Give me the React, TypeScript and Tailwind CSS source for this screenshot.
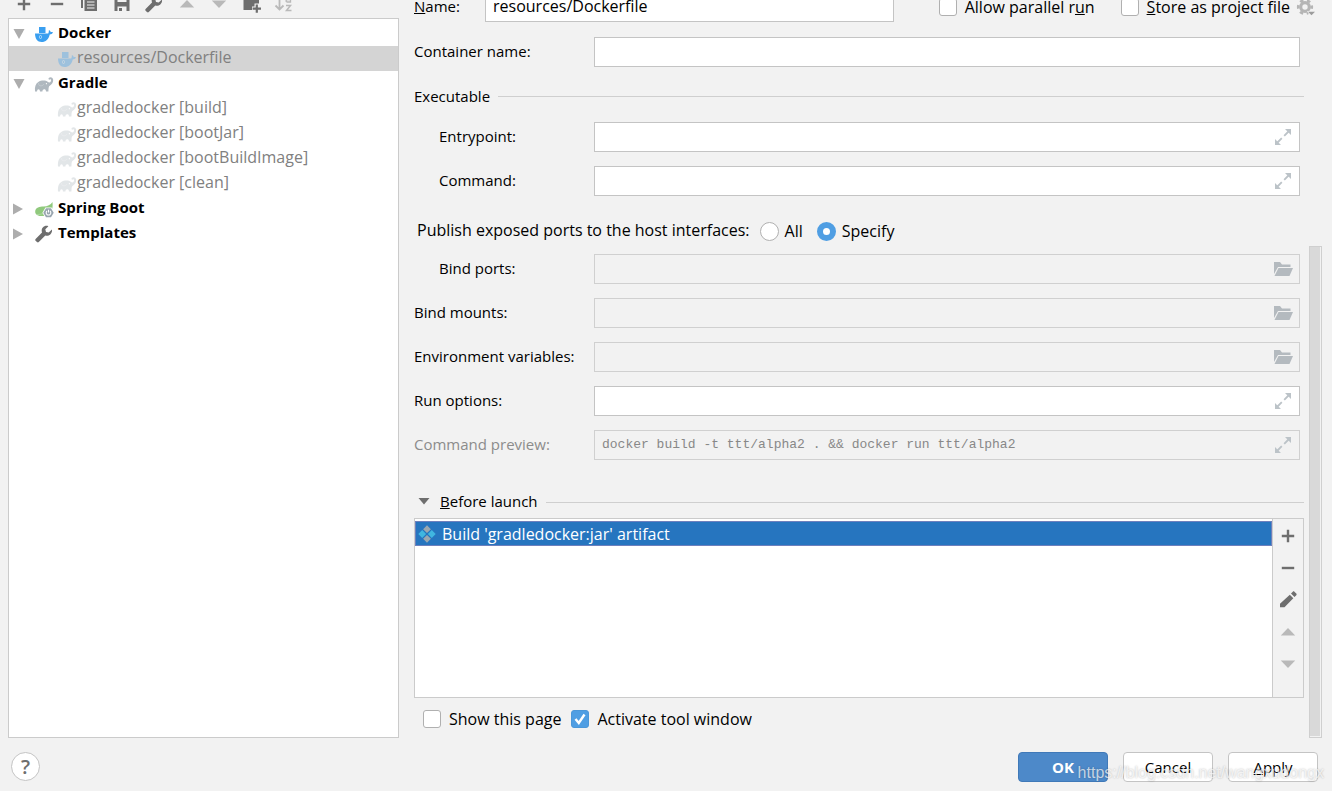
import { useState } from 'react';
import type { ReactNode } from 'react';

const DockerIcon = ({ faded = false }: { faded?: boolean }) => (
    <svg viewBox="0 0 20 20" className={`size-5 shrink-0 ${faded ? 'opacity-35' : ''}`}>
        <path d="M5 3h6.500v6H5z" fill="#3a9ff0" />
        <path d="M1 9.5h13.200c.6-1 .7-2.500.7-3.500 1.200.6 1.700 1.400 1.800 2.200.8-.2 1.700-.1 2.300.3-.6 1.300-1.900 1.900-3.300 1.900C14.700 15 11.700 18 7.600 18 3.400 18 1 14.500 1 9.500z" fill="#3a9ff0" />
        <rect x="5.500" y="11.500" width="2" height="3" rx="1" fill="none" stroke="#c5e4fb" strokeWidth=".8" />
    </svg>
);

const GradleIcon = ({ faded = false }: { faded?: boolean }) => (
    <svg viewBox="0 0 20 20" className={`size-5 shrink-0 ${faded ? 'opacity-35' : ''}`}>
        <path d="M1 17.500C.6 13 1.500 9.700 4.300 8 7 6.300 11.500 6 14 8c1 .8 2.200.5 2.900-.8.4-.9.3-1.700-.3-1.900-.6-.2-.9.5-1.600.3-.7-.3-.6-1.300 0-1.800 1.700-1.300 4.200-.2 4.200 2.300 0 2.900-1.700 4.600-3.500 5.700-.9.600-1.100 2.200-1.200 3.700l-.1 2H12c0-1.600-.8-2.200-1.800-2.200s-1.700.7-1.800 2.200H6c-.1-1.500-.7-2.200-1.500-2.200S3.200 16 3 17.500z" fill="#afb8bf" />
        <path d="M4.500 9c-.1 2 .9 3 2.700 2.800 1.500-.1 2.300-.9 2.500-1.800" fill="none" stroke="#cdd3d7" strokeWidth=".6" />
        <circle cx="12.400" cy="9.700" r=".6" fill="#fff" />
    </svg>
);

const SpringIcon = () => (
    <svg viewBox="0 0 20 20" className="size-5 shrink-0">
        <path d="M18.500 3c.3 4 .3 7-1.500 9.500L10 17H5.500C2.500 16.500.8 14.500 1.200 12 1.800 8.500 5.500 7.700 9.500 7.500 13.500 7.400 16.500 6 18.500 3z" fill="#90c97d" />
        <path d="M3 15.500c4 0 8-1 11-4" fill="none" stroke="#b5dca8" strokeWidth=".8" />
        <path d="M11.400 8.500h6.200l3 5.200-3 5.200h-6.200l-3-5.200z" fill="#fff" />
        <path d="M12 9.200h5l2.700 4.500-2.700 4.600h-5l-2.700-4.600z" fill="#98a5af" />
        <path d="M13 12a2.300 2.300 0 1 0 3 0M14.500 10.800v2.600" fill="none" stroke="#fff" strokeWidth="1.100" />
    </svg>
);

const WrenchIcon = () => (
    <svg viewBox="0 0 20 20" className="size-5 shrink-0">
        <path d="M17.900 5.600l-3.200 3-2.700-.6-.7-2.700 3.100-3.100c-2-.8-4.300-.2-5.600 1.300-1.200 1.400-1.400 3.200-.8 4.900L1.600 14.900c-.5.5-.5 1.300 0 1.800l1.400 1.400c.5.500 1.300.5 1.800 0l6.500-6.600c1.700.6 3.700.2 5-1.100 1.400-1.300 2.100-3.100 1.600-4.800z" fill="#6e6e6e" />
    </svg>
);

const PlusIcon = () => (
    <svg viewBox="0 0 20 20" className="size-5 shrink-0">
        <path d="M8.800 3.800h2.400v5h5v2.400h-5v5H8.800v-5h-5V8.800h5z" fill="#6e6e6e" />
    </svg>
);

const MinusIcon = () => (
    <svg viewBox="0 0 20 20" className="size-5 shrink-0">
        <path d="M3.800 8.800h12.400v2.400H3.800z" fill="#6e6e6e" />
    </svg>
);

const UpIcon = () => (
    <svg viewBox="0 0 20 20" className="size-5 shrink-0">
        <path d="M10 6l7.200 7.500H2.800z" fill="#b9b9b9" />
    </svg>
);

const DownIcon = () => (
    <svg viewBox="0 0 20 20" className="size-5 shrink-0">
        <path d="M10 14L2.800 6.500h14.400z" fill="#b9b9b9" />
    </svg>
);

const PencilIcon = () => (
    <svg viewBox="0 0 20 20" className="size-5 shrink-0">
        <path d="M11.800 4.700l3.500 3.500-8.800 9H2v-3.500zM13 3.500l1.800-1.800c.5-.5 1.100-.5 1.600 0l1.900 1.900c.5.5.5 1.100 0 1.600L16.500 7z" fill="#6e6e6e" />
    </svg>
);

const CopyIcon = () => (
    <svg viewBox="0 0 20 20" className="size-5 shrink-0">
        <path d="M2 1h11v2H4v11H2z" fill="#6e6e6e" />
        <path d="M5.500 4.500h12.500V17H5.500z" fill="#6e6e6e" />
        <path d="M8 8h7.500M8 11h7.500M8 14h7.500" stroke="#f2f2f2" strokeWidth="1.200" />
    </svg>
);

const SaveIcon = () => (
    <svg viewBox="0 0 20 20" className="size-5 shrink-0">
        <path d="M2.500 2.500h13l2 2V17h-15z" fill="#6e6e6e" />
        <path d="M5.500 2.500h9V8h-9zM5.500 12.500h9V17h-9z" fill="#f2f2f2" />
        <path d="M7 14h3v3H7z" fill="#6e6e6e" />
    </svg>
);

const NewFolderIcon = () => (
    <svg viewBox="0 0 20 20" className="size-5 shrink-0">
        <path d="M1.500 3h6l2 2h7.500v4.500h-4.500v3H10V16H1.500z" fill="#6e6e6e" />
        <path d="M13.700 10.500h2.200v3H19v2.200h-3.100v3h-2.200v-3h-3.100v-2.200h3.100z" fill="#6e6e6e" />
    </svg>
);

const SortIcon = () => (
    <svg viewBox="0 0 20 20" className="size-5 shrink-0" fill="none" stroke="#b9b9b9">
        <path d="M5.500 2v13M1.500 11.500l4 4 4-4" strokeWidth="1.800" />
        <path d="M12.500 3.500h4v4.500h-3.500c-1.500-.5-1-2.300.5-2.300h3" strokeWidth="1.300" />
        <path d="M12 11.500h4.500l-4 5h5" strokeWidth="1.500" />
    </svg>
);

const ExpandIcon = () => (
    <svg viewBox="0 0 20 20" className="size-5">
        <path d="M12 2h6v6zM2 18v-6l6 6z" fill="#bcc3c8" />
        <path d="M15.500 4.500L11.200 8.800M4.500 15.500l4.300-4.300" stroke="#bcc3c8" strokeWidth="1.800" />
    </svg>
);

const FolderIcon = () => (
    <svg viewBox="0 0 20 20" className="size-5">
        <path d="M1 3h6l2 2.500h8.500V8H5L1 15z" fill="#b4babf" />
        <path d="M5.500 9H20l-3.500 8H1.500z" fill="#b4babf" />
    </svg>
);

const GearIcon = () => (
    <svg viewBox="0 0 20 20" className="size-5">
        <circle cx="9" cy="10" r="4.300" fill="none" stroke="#b5b5b5" strokeWidth="3.200" />
        <circle cx="9" cy="10" r="6.800" fill="none" stroke="#b5b5b5" strokeWidth="2.600" strokeDasharray="3.560" strokeDashoffset="1.780" />
        <path d="M11 14h9v5h-6z" fill="#f2f2f2" />
        <path d="M12 14.800h7L15.500 18.300z" fill="#9c9c9c" />
    </svg>
);

const ArtifactIcon = () => (
    <svg viewBox="0 0 20 20" className="size-5">
        <path d="M10 1.300l3.900 3.900L10 9.100 6.100 5.200zM10 10.900l3.900 3.900-3.900 3.900-3.900-3.900z" fill="#9aa7b0" />
        <path d="M5.200 6.100L9.100 10l-3.900 3.900L1.300 10zM14.800 6.100l3.900 3.900-3.900 3.900-3.900-3.900z" fill="#40b6e0" />
    </svg>
);

const CHILDREN = [
    'gradledocker [build]',
    'gradledocker [bootJar]',
    'gradledocker [bootBuildImage]',
    'gradledocker [clean]',
];

const GroupRow = ({ label, icon, open }: { label: string; icon: ReactNode; open: boolean }) => (
    <li className="flex h-[25px] items-center pl-1">
        <button type="button" aria-label={`Toggle ${label}`} className="mr-[9px] size-3">
            <svg viewBox="0 0 12 12" className="size-3">
                <path d={open ? 'M.5 1h11L6 11z' : 'M0 .5l10 5.500-10 5.500z'} fill="#adadad" />
            </svg>
        </button>
        {icon}
        <span className="ml-1 pb-1 text-[15px] font-bold">{label}</span>
    </li>
);

const LeafRow = ({ label, icon, selected = false }: { label: string; icon: ReactNode; selected?: boolean }) => (
    <li className={`flex h-[25px] items-center pl-12 text-[#808080] ${selected ? 'bg-[#d4d4d4]' : ''}`}>
        {icon}
        <span className="pb-1">{label}</span>
    </li>
);

const Check = ({ label, defaultChecked = false }: { label: ReactNode; defaultChecked?: boolean }) => (
    <label className="flex items-center gap-2">
        <span className="relative size-[18px]">
            <input
                type="checkbox"
                defaultChecked={defaultChecked}
                className="peer block size-[18px] appearance-none rounded-[3px] border border-[#b0b0b0] bg-white checked:border-[#4b97d9] checked:bg-[#4f9ee3]"
            />
            <svg viewBox="0 0 18 18" className="pointer-events-none absolute inset-0 hidden peer-checked:block">
                <path d="M4.500 9l3.300 4L13.500 4.500" fill="none" stroke="#fff" strokeWidth="2.400" />
            </svg>
        </span>
        <span>{label}</span>
    </label>
);

interface FieldProps {
    id: string;
    label: string;
    indent?: boolean;
    disabled?: boolean;
    value?: string;
    action?: 'expand' | 'browse';
}

const Field = ({ id, label, indent, disabled, value, action }: FieldProps) => (
    <div className="flex h-[30px] items-center pr-1">
        <label htmlFor={id} className={`w-[180px] shrink-0 pb-0.5 text-[15px] ${indent ? 'pl-[25px]' : ''} ${value ? 'text-[#8c8c8c]' : ''}`}>
            {label}
        </label>
        <div className={`flex h-full flex-1 items-center border pr-[6px] ${disabled ? 'border-[#d0d0d0]' : 'border-[#c4c4c4] bg-white'}`}>
            <input
                id={id}
                type="text"
                defaultValue={value}
                disabled={disabled}
                className="h-full min-w-0 flex-1 px-[7px] pb-0.5 font-['Liberation_Mono',monospace] text-[13px] text-[#888888] outline-none"
            />
            {action && (
                <button type="button" aria-label={action === 'expand' ? `Expand ${label}` : `Browse ${label}`}>
                    {action === 'expand' ? <ExpandIcon /> : <FolderIcon />}
                </button>
            )}
        </div>
    </div>
);

const TOOLS = [
    { name: 'Add', icon: <PlusIcon /> },
    { name: 'Remove', icon: <MinusIcon /> },
    { name: 'Copy', icon: <CopyIcon /> },
    { name: 'Save', icon: <SaveIcon /> },
    { name: 'Edit templates', icon: <WrenchIcon /> },
    { name: 'Move up', icon: <UpIcon /> },
    { name: 'Move down', icon: <DownIcon /> },
    { name: 'New folder', icon: <NewFolderIcon /> },
    { name: 'Sort', icon: <SortIcon /> },
];

const TASK_TOOLS = [
    { name: 'Add task', icon: <PlusIcon /> },
    { name: 'Remove task', icon: <MinusIcon /> },
    { name: 'Edit task', icon: <PencilIcon /> },
    { name: 'Move task up', icon: <UpIcon /> },
    { name: 'Move task down', icon: <DownIcon /> },
];

const RADIO = 'size-[19px] appearance-none rounded-full border border-[#b0b0b0] bg-white checked:border-[6px] checked:border-[#4f9ee3]';

const BUTTON = 'h-[30px] w-[90px] rounded-[4px] border text-[15px]';

const App = () => {
    const [ports, setPorts] = useState('specify');

    return (
        <div className="relative flex h-screen flex-col overflow-hidden bg-[#f2f2f2] font-['Open_Sans',sans-serif] text-base leading-5 text-black">
            <main className="flex min-h-0 flex-1">
                <aside className="flex w-[399px] shrink-0 flex-col pl-2">
                    <div className="flex h-[18px] w-[286px] items-end justify-between overflow-hidden pb-1 pl-[6px]">
                        {TOOLS.map((t) => (
                            <button key={t.name} type="button" aria-label={t.name}>{t.icon}</button>
                        ))}
                    </div>
                    <ul className="flex-1 border border-[#cbcbcb] bg-white pt-0.5">
                        <GroupRow label="Docker" icon={<DockerIcon />} open />
                        <LeafRow label="resources/Dockerfile" icon={<DockerIcon faded />} selected />
                        <GroupRow label="Gradle" icon={<GradleIcon />} open />
                        {CHILDREN.map((c) => (
                            <LeafRow key={c} label={c} icon={<GradleIcon faded />} />
                        ))}
                        <GroupRow label="Spring Boot" icon={<SpringIcon />} open={false} />
                        <GroupRow label="Templates" icon={<WrenchIcon />} open={false} />
                    </ul>
                </aside>

                <section className="flex min-w-0 flex-1 flex-col pl-[15px] pr-[5px]">
                    {/* first row is scrolled partly out of view */}
                    <div className="-mr-3 flex h-[22px] shrink-0 items-end">
                        <div className="flex h-[30px] flex-1 items-center">
                            <label htmlFor="name" className="w-[71px] pb-0.5 text-[15px]"><u>N</u>ame:</label>
                            <input
                                id="name"
                                type="text"
                                defaultValue="resources/Dockerfile"
                                className="h-full min-w-0 flex-1 border border-[#c4c4c4] bg-white px-[7px] pb-0.5 outline-none"
                            />
                            <div className="ml-[45px] flex items-center">
                                <Check label={<>Allow parallel r<u>u</u>n</>} />
                                <div className="ml-[26px]">
                                    <Check label={<><u>S</u>tore as project file</>} />
                                </div>
                                <button type="button" aria-label="Storage settings" className="ml-[6px]"><GearIcon /></button>
                            </div>
                        </div>
                    </div>

                    <div className="mt-[15px]">
                        <Field id="container" label="Container name:" />
                    </div>

                    <h2 className="mt-[15px] mb-3 flex h-7 items-center gap-2 text-[15px]">
                        Executable
                        <span className="h-px flex-1 bg-[#cfcfcf]" />
                    </h2>
                    <div className="flex flex-col gap-[14px]">
                        <Field id="entrypoint" label="Entrypoint:" indent action="expand" />
                        <Field id="command" label="Command:" indent action="expand" />
                    </div>

                    <fieldset className="mt-6 mb-[10px] flex h-6 items-center pl-[3px]">
                        <span className="mr-[10px] pb-0.5">Publish exposed ports to the host interfaces:</span>
                        <label className="mr-[14px] flex items-center gap-[6px]">
                            <input type="radio" name="ports" className={RADIO} checked={ports === 'all'} onChange={() => setPorts('all')} />
                            All
                        </label>
                        <label className="flex items-center gap-[6px]">
                            <input type="radio" name="ports" className={RADIO} checked={ports === 'specify'} onChange={() => setPorts('specify')} />
                            Specify
                        </label>
                    </fieldset>

                    <div className="flex flex-col gap-[14px]">
                        <Field id="bind-ports" label="Bind ports:" indent disabled action="browse" />
                        <Field id="bind-mounts" label="Bind mounts:" disabled action="browse" />
                        <Field id="env" label="Environment variables:" disabled action="browse" />
                        <Field id="run-options" label="Run options:" action="expand" />
                        <Field
                            id="preview"
                            label="Command preview:"
                            disabled
                            value="docker build -t ttt/alpha2 . && docker run ttt/alpha2"
                            action="expand"
                        />
                    </div>

                    <h2 className="mt-[30px] mb-1 flex h-6 items-center gap-2 text-[15px]">
                        <button type="button" className="flex items-center gap-[6px]">
                            <svg viewBox="0 0 20 20" className="size-5">
                                <path d="M4.500 6h11L10 12.500z" fill="#6e6e6e" />
                            </svg>
                            <span className="pb-0.5"><u>B</u>efore launch</span>
                        </button>
                        <span className="h-px flex-1 bg-[#cfcfcf]" />
                    </h2>

                    <div className="flex min-h-0 flex-1 border border-[#cbcbcb]">
                        <ul className="flex-1 bg-white pt-0.5">
                            <li className="flex h-[25px] items-center gap-[5px] border border-[#6d80bd] bg-[#2675bf] pl-px text-white">
                                <ArtifactIcon />
                                Build 'gradledocker:jar' artifact
                            </li>
                        </ul>
                        <div className="flex w-[31px] flex-col border-l border-[#cbcbcb] pt-px">
                            {TASK_TOOLS.map((t) => (
                                <button key={t.name} type="button" aria-label={t.name} className="flex h-8 items-center justify-center">
                                    {t.icon}
                                </button>
                            ))}
                        </div>
                    </div>

                    <div className="mt-3 mb-[10px] flex h-[18px] items-center gap-[10px] pl-[9px]">
                        <Check label="Show this page" />
                        <Check label="Activate tool window" defaultChecked />
                    </div>
                </section>

                <div className="mr-[10px] flex w-[13px] flex-col pt-[246px]">
                    <div className="flex flex-1 border border-[#cfcfcf] pr-px pb-px">
                        <div className="flex-1 bg-[#d9d9d9]" />
                    </div>
                </div>
            </main>

            <footer className="flex h-[53px] shrink-0 items-start gap-[15px] pt-[14px] pr-[14px] pl-[11px]">
                <button type="button" aria-label="Help" className="mr-auto size-[29px] rounded-full border border-[#c4c4c4] bg-white text-xl leading-5 font-semibold text-[#6e6e6e]">
                    ?
                </button>
                <button type="button" className={`${BUTTON} border-[#4079b8] bg-[#4d89c9] font-bold text-white`}>OK</button>
                <button type="button" className={`${BUTTON} border-[#c4c4c4] bg-white`}>Cancel</button>
                <button type="button" className={`${BUTTON} border-[#c4c4c4] bg-white`}><u>A</u>pply</button>
            </footer>

            <span className="pointer-events-none absolute right-2 bottom-2 font-['Liberation_Sans',sans-serif] text-base leading-5 text-white/70 [text-shadow:0_0_2px_#00000044]">
                https://blog.csdn.net/wangxudongx
            </span>
        </div>
    );
};

export default App;
